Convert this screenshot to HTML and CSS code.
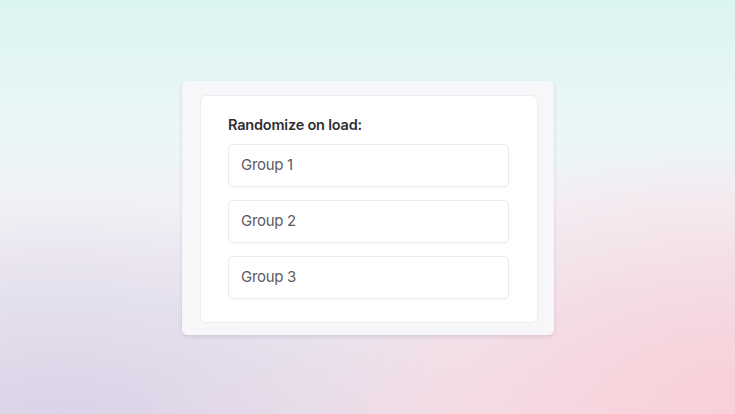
FILE: index.html
```html
<!DOCTYPE html>
<html lang="en">
<head>
<meta charset="utf-8">
<link rel="stylesheet" href="styles.css">
</head>
<body>
<main class="stage">
  <section class="outer">
    <div class="inner">
      <h2 class="title">Randomize on load:</h2>
      <ul class="groups">
        <li class="group">Group 1</li>
        <li class="group">Group 2</li>
        <li class="group">Group 3</li>
      </ul>
    </div>
  </section>
</main>
</body>
</html>
```

FILE: styles.css
```css
* { box-sizing: border-box; }
html, body { margin: 0; height: 100%; }
body {
  font-family: Inter, "Noto Sans", sans-serif;
  background:
    radial-gradient(ellipse 420px 260px at 735px 400px, rgba(250, 205, 214, 0.9), rgba(250, 205, 214, 0) 100%),
    radial-gradient(ellipse 420px 240px at 60px 430px, rgba(215, 210, 232, 0.95), rgba(215, 210, 232, 0) 100%),
    linear-gradient(180deg, #dcf4f0 0%, #e9f7f6 30%, #f3f1f6 50%, #eee9f1 75%, #f3e2ea 100%);
}
.stage {
  height: 414px;
  display: flex;
  justify-content: center;
  align-items: flex-start;
  padding-top: 81px;
}
.outer {
  width: 372px;
  margin-left: 1px;
  background: #f7f7fa;
  border-radius: 5px;
  padding: 14px 16px 12px 18px;
  box-shadow: 0 2px 4px rgba(120, 110, 140, 0.18), 0 0 1px rgba(120, 110, 140, 0.15);
}
.inner {
  background: #ffffff;
  border-radius: 6px;
  border: 1px solid #ececf1;
  padding: 19px 28px 23px 27px;
}
.title {
  margin: 0 0 10px 0;
  font-size: 14.5px;
  line-height: 19px;
  font-weight: 600;
  color: #2f2f33;
  letter-spacing: -0.2px;
}
.groups {
  list-style: none;
  margin: 0;
  padding: 0;
  display: flex;
  flex-direction: column;
  gap: 13px;
}
.group {
  height: 43px;
  display: flex;
  align-items: center;
  padding: 0 0 2px 12px;
  border: 1px solid #ebebee;
  border-radius: 5px;
  background: #fff;
  box-shadow: 0 1px 2px rgba(0, 0, 0, 0.04);
  font-size: 15px;
  color: #5a5a5f;
  letter-spacing: -0.3px;
}
```
